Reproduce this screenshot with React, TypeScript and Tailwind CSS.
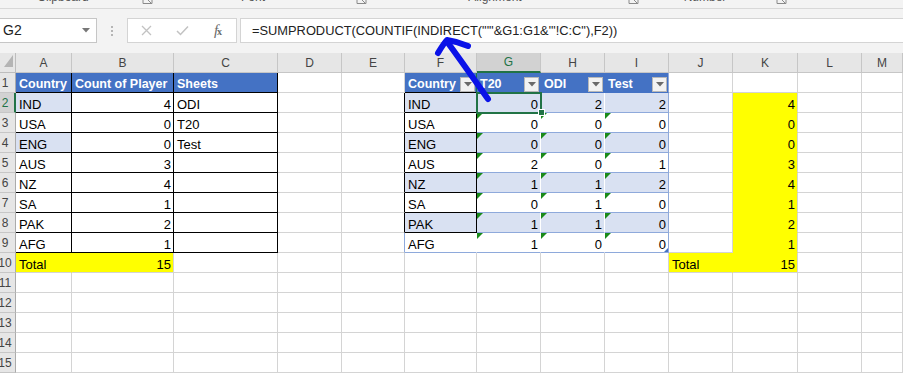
import React from 'react';

const COLS = ['A', 'B', 'C', 'D', 'E', 'F', 'G', 'H', 'I', 'J', 'K', 'L', 'M'];
const W = [
  'w-[56px]', 'w-[102px]', 'w-[104px]', 'w-[64px]', 'w-[63px]', 'w-[72px]',
  'w-[64px]', 'w-[64px]', 'w-[64px]', 'w-[64px]', 'w-[65px]', 'w-[64px]', 'w-[41px]',
];

type Cell = {
  t?: string;
  r?: boolean;
  bg: string;
  br: string;
  bb: string;
  hdr?: boolean;
  tri?: boolean;
  filter?: boolean;
  handle?: boolean;
};

const NAMES = ['IND', 'USA', 'ENG', 'AUS', 'NZ', 'SA', 'PAK', 'AFG'];
const COUNTS = ['4', '0', '0', '3', '4', '1', '2', '1'];
const SHEETS = ['ODI', 'T20', 'Test'];
const GV = ['0', '0', '0', '2', '1', '0', '1', '1'];
const HV = ['2', '0', '0', '0', '1', '1', '1', '0'];
const IV = ['2', '0', '0', '1', '2', '0', '0', '0'];

const BLUE = 'bg-[#4472c4]';
const BAND = 'bg-[#d9e1f2]';
const YEL = 'bg-[#ffff00]';

function buildRow(r: number): Cell[] {
  const c: Cell[] = COLS.map(() => ({
    bg: 'bg-white',
    br: 'border-r-[#d4d4d4]',
    bb: 'border-b-[#d4d4d4]',
  }));
  if (r === 1) {
    ['Country', 'Count of Player', 'Sheets'].forEach((t, i) => {
      c[i] = { t, bg: BLUE, br: 'border-r-black', bb: 'border-b-black', hdr: true };
    });
    c[5] = { t: 'Country', bg: BLUE, br: 'border-r-[#217346]', bb: 'border-b-black', hdr: true, filter: true };
    c[6] = { t: 'T20', bg: BLUE, br: 'border-r-[#4472c4]', bb: 'border-b-[#4472c4]', hdr: true, filter: true };
    c[7] = { t: 'ODI', bg: BLUE, br: 'border-r-[#4472c4]', bb: 'border-b-[#4472c4]', hdr: true, filter: true };
    c[8] = { t: 'Test', bg: BLUE, br: 'border-r-[#8ea9db]', bb: 'border-b-[#4472c4]', hdr: true, filter: true };
  } else if (r >= 2 && r <= 9) {
    const i = r - 2;
    const band = r % 2 === 0 ? BAND : 'bg-white';
    c[0] = { t: NAMES[i], bg: i === 0 || i === 2 ? BAND : 'bg-white', br: 'border-r-black', bb: 'border-b-black' };
    c[1] = { t: COUNTS[i], r: true, bg: 'bg-white', br: 'border-r-black', bb: 'border-b-black' };
    c[2] = { t: SHEETS[i] ?? '', bg: 'bg-white', br: 'border-r-black', bb: 'border-b-black' };
    c[4] = { ...c[4], br: r <= 8 ? 'border-r-black' : 'border-r-[#8ea9db]' };
    c[5] = {
      t: NAMES[i],
      bg: band,
      br: r <= 8 ? 'border-r-black' : 'border-r-white',
      bb: r <= 8 ? 'border-b-black' : 'border-b-[#8ea9db]',
    };
    c[6] = { t: GV[i], r: true, bg: band, br: 'border-r-white', bb: 'border-b-[#8ea9db]', tri: r >= 3 };
    c[7] = { t: HV[i], r: true, bg: band, br: 'border-r-white', bb: 'border-b-[#8ea9db]', tri: r >= 3 };
    c[8] = { t: IV[i], r: true, bg: band, br: 'border-r-[#8ea9db]', bb: 'border-b-[#8ea9db]', tri: r >= 3, handle: r === 9 };
    c[10] = { t: COUNTS[i], r: true, bg: YEL, br: 'border-r-[#d4d4d4]', bb: 'border-b-[#ffff00]' };
  } else if (r === 10) {
    c[0] = { t: 'Total', bg: YEL, br: 'border-r-[#ffff00]', bb: 'border-b-[#d4d4d4]' };
    c[1] = { t: '15', r: true, bg: YEL, br: 'border-r-[#d4d4d4]', bb: 'border-b-[#d4d4d4]' };
    c[9] = { t: 'Total', bg: YEL, br: 'border-r-[#ffff00]', bb: 'border-b-[#d4d4d4]' };
    c[10] = { t: '15', r: true, bg: YEL, br: 'border-r-[#d4d4d4]', bb: 'border-b-[#d4d4d4]' };
  }
  return c;
}

function FilterBtn() {
  return (
    <span className="absolute right-[1px] bottom-[0px] w-[15px] h-[15px] bg-[#f2f2f2] border border-[#b8b8b8] flex items-center justify-center">
      <svg width="8" height="5" viewBox="0 0 8 5">
        <path d="M0 0 L8 0 L4 4.5 Z" fill="#6a6a6a" />
      </svg>
    </span>
  );
}

function Launcher() {
  return (
    <svg width="11" height="5" viewBox="0 0 11 5" className="ml-[6px]">
      <path d="M1 0 V3.5 H10 V0" fill="none" stroke="#8a8a8a" strokeWidth="1" />
      <path d="M6 0 L9 3" stroke="#8a8a8a" strokeWidth="1" />
    </svg>
  );
}

function Ribbon() {
  const groups = [
    { label: 'Clipboard', w: 'w-[158px]', pad: 'pr-[10px]' },
    { label: 'Font', w: 'w-[214px]', pad: 'pr-[2px]' },
    { label: 'Alignment', w: 'w-[272px]', pad: 'pr-[4px]' },
    { label: 'Number', w: 'w-[148px]', pad: 'pr-[4px]' },
  ];
  return (
    <div className="h-[9px] bg-[#f3f3f3] border-b border-[#d8d8d8] flex overflow-hidden">
      {groups.map((g) => (
        <div key={g.label} className={`${g.w} flex shrink-0`}>
          <div className={`flex-1 text-center text-[12px] leading-[14px] -mt-[10px] text-[#555] ${g.pad}`}>
            {g.label}
          </div>
          <div className="w-[22px] flex items-start">
            <Launcher />
          </div>
        </div>
      ))}
      <div className="flex-1" />
    </div>
  );
}

function FormulaBar() {
  return (
    <div className="h-[44px] bg-[#f3f3f3] flex items-start pt-[9px]">
      <div className="w-[97px] h-[25px] bg-white border border-[#c6c6c6] border-l-0 flex items-center justify-between pl-[3px] pr-[6px] shrink-0">
        <span className="text-[14px] text-[#222]">G2</span>
        <svg width="8" height="5" viewBox="0 0 8 5">
          <path d="M0 0 L8 0 L4 4.5 Z" fill="#777" />
        </svg>
      </div>
      <div className="w-[30px] h-[25px] flex flex-col items-center justify-center gap-[2px] shrink-0">
        <span className="w-[2px] h-[2px] bg-[#b5b5b5]" />
        <span className="w-[2px] h-[2px] bg-[#b5b5b5]" />
        <span className="w-[2px] h-[2px] bg-[#b5b5b5]" />
      </div>
      <div className="w-[110px] h-[25px] bg-white border border-[#d4d4d4] flex items-center shrink-0">
        <div className="w-[36px] flex justify-center">
          <svg width="11" height="11" viewBox="0 0 11 11">
            <path d="M1 1 L10 10 M10 1 L1 10" stroke="#c2c2c2" strokeWidth="1.3" />
          </svg>
        </div>
        <div className="w-[36px] flex justify-center">
          <svg width="13" height="11" viewBox="0 0 13 11">
            <path d="M1 6 L4.5 9.5 L12 1.5" fill="none" stroke="#c2c2c2" strokeWidth="1.5" />
          </svg>
        </div>
        <div className="w-[36px] flex justify-center text-[#6b6b6b] font-['Liberation_Serif',serif] italic text-[15px] leading-none">
          f<span className="text-[10px] not-italic font-bold -ml-[1px] mt-[4px]">x</span>
        </div>
      </div>
      <div className="ml-[3px] flex-1 h-[25px] bg-white border border-[#d4d4d4] border-r-0 pl-[11px] flex items-center text-[12.85px] text-[#222] whitespace-nowrap">
        =SUMPRODUCT(COUNTIF(INDIRECT("'"&amp;G1:G1&amp;"'!C:C"),F2))
      </div>
    </div>
  );
}

function ColumnHeader() {
  return (
    <div className="flex h-[20px]">
      <div className="w-[16px] h-[20px] bg-[#e6e6e6] border-r border-b border-[#bdbdbd] relative shrink-0">
        <svg width="9" height="12" viewBox="0 0 9 12" className="absolute left-[4px] top-[2px]">
          <path d="M9 0 L9 12 L0 12 Z" fill="#b4b4b4" />
        </svg>
      </div>
      {COLS.map((l, i) => (
        <div
          key={l}
          className={`${W[i]} h-[20px] shrink-0 flex items-center justify-center text-[12px] border-r border-r-[#c6c6c6] ${
            l === 'G'
              ? 'bg-[#d2d2d2] text-[#217346] border-b-2 border-b-[#217346]'
              : 'bg-[#e6e6e6] text-[#444] border-b border-b-[#c6c6c6]'
          }`}
        >
          {l}
        </div>
      ))}
    </div>
  );
}

function Row({ r }: { r: number }) {
  const cells = buildRow(r);
  const sel = r === 2;
  return (
    <div className="flex h-[20px]">
      <div
        className={`w-[16px] h-[20px] shrink-0 overflow-hidden border-b border-b-[#c6c6c6] flex items-center ${
          sel ? 'bg-[#d2d2d2] text-[#217346] border-r-2 border-r-[#217346]' : 'bg-[#e6e6e6] text-[#444] border-r border-r-[#ababab]'
        }`}
      >
        <div className="w-[32px] -ml-[11px] shrink-0 text-center text-[12px] leading-[14px] pt-[1px]">{r}</div>
      </div>
      {cells.map((c, i) => (
        <div
          key={i}
          className={`${W[i]} h-[20px] shrink-0 relative border-r border-b ${c.br} ${c.bb} ${c.bg} flex items-end px-[2px] leading-[15px] whitespace-nowrap ${
            c.r ? 'justify-end' : 'justify-start pl-[3px]'
          } ${c.hdr ? 'text-white font-bold text-[12.5px]' : 'text-black text-[13px]'}`}
        >
          {c.tri && (
            <span className="absolute left-0 top-0 w-0 h-0 border-t-[6px] border-t-[#1a8a1a] border-r-[6px] border-r-transparent" />
          )}
          {c.t}
          {c.filter && <FilterBtn />}
          {c.handle && (
            <span className="absolute right-0 bottom-0 w-0 h-0 border-b-[4px] border-b-[#4472c4] border-l-[4px] border-l-transparent" />
          )}
        </div>
      ))}
    </div>
  );
}

export default function App() {
  const rows = Array.from({ length: 15 }, (_, i) => i + 1);
  return (
    <div className="relative w-[903px] h-[373px] overflow-hidden bg-white font-['Liberation_Sans',Arial,sans-serif]">
      <Ribbon />
      <FormulaBar />
      <ColumnHeader />
      {rows.map((r) => (
        <Row key={r} r={r} />
      ))}
      <div className="absolute left-[476px] top-[92px] w-[66px] h-[22px] border-2 border-[#217346] pointer-events-none" />
      <div className="absolute left-[538px] top-[109px] w-[7px] h-[7px] bg-[#217346] border border-white pointer-events-none" />
      <svg
        className="absolute left-0 top-0 pointer-events-none"
        width="903"
        height="373"
        viewBox="0 0 903 373"
      >
        <path
          d="M488 99 C 476 82, 462 62, 448 43"
          fill="none"
          stroke="#0a12e8"
          strokeWidth="6"
          strokeLinecap="round"
        />
        <path
          d="M438 53 C 441 48, 444 43, 447 40 C 454 41, 461 43, 468 46"
          fill="none"
          stroke="#0a12e8"
          strokeWidth="6"
          strokeLinecap="round"
          strokeLinejoin="round"
        />
      </svg>
    </div>
  );
}
